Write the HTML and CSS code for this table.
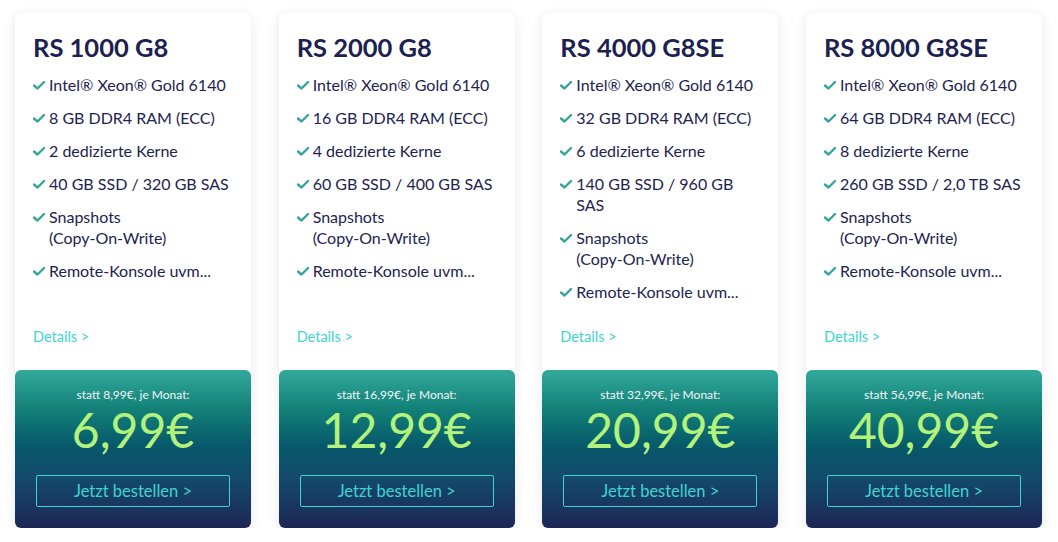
FILE: index.html
```html
<!DOCTYPE html>
<html lang="de">
<head>
<meta charset="utf-8">
<link rel="stylesheet" href="styles.css">
</head>
<body>
<div class="plans">
  <div class="card">
    <div class="top">
      <h2 class="title">RS 1000 G8</h2>
      <ul class="features">
        <li><svg class="chk" viewBox="0 0 12 9"><path d="M1 4.5 L4.5 7.5 L11 1"/></svg><span>Intel® Xeon® Gold 6140</span></li>
        <li><svg class="chk" viewBox="0 0 12 9"><path d="M1 4.5 L4.5 7.5 L11 1"/></svg><span>8 GB DDR4 RAM (ECC)</span></li>
        <li><svg class="chk" viewBox="0 0 12 9"><path d="M1 4.5 L4.5 7.5 L11 1"/></svg><span>2 dedizierte Kerne</span></li>
        <li><svg class="chk" viewBox="0 0 12 9"><path d="M1 4.5 L4.5 7.5 L11 1"/></svg><span>40 GB SSD / 320 GB SAS</span></li>
        <li><svg class="chk" viewBox="0 0 12 9"><path d="M1 4.5 L4.5 7.5 L11 1"/></svg><span>Snapshots<br>(Copy-On-Write)</span></li>
        <li><svg class="chk" viewBox="0 0 12 9"><path d="M1 4.5 L4.5 7.5 L11 1"/></svg><span>Remote-Konsole uvm...</span></li>
      </ul>
      <a class="details" href="#">Details &gt;</a>
    </div>
    <div class="price">
      <div class="old">statt 8,99€, je Monat:</div>
      <div class="amount">6,99€</div>
      <a class="order" href="#">Jetzt bestellen &gt;</a>
    </div>
  </div>
  <div class="card">
    <div class="top">
      <h2 class="title">RS 2000 G8</h2>
      <ul class="features">
        <li><svg class="chk" viewBox="0 0 12 9"><path d="M1 4.5 L4.5 7.5 L11 1"/></svg><span>Intel® Xeon® Gold 6140</span></li>
        <li><svg class="chk" viewBox="0 0 12 9"><path d="M1 4.5 L4.5 7.5 L11 1"/></svg><span>16 GB DDR4 RAM (ECC)</span></li>
        <li><svg class="chk" viewBox="0 0 12 9"><path d="M1 4.5 L4.5 7.5 L11 1"/></svg><span>4 dedizierte Kerne</span></li>
        <li><svg class="chk" viewBox="0 0 12 9"><path d="M1 4.5 L4.5 7.5 L11 1"/></svg><span>60 GB SSD / 400 GB SAS</span></li>
        <li><svg class="chk" viewBox="0 0 12 9"><path d="M1 4.5 L4.5 7.5 L11 1"/></svg><span>Snapshots<br>(Copy-On-Write)</span></li>
        <li><svg class="chk" viewBox="0 0 12 9"><path d="M1 4.5 L4.5 7.5 L11 1"/></svg><span>Remote-Konsole uvm...</span></li>
      </ul>
      <a class="details" href="#">Details &gt;</a>
    </div>
    <div class="price">
      <div class="old">statt 16,99€, je Monat:</div>
      <div class="amount">12,99€</div>
      <a class="order" href="#">Jetzt bestellen &gt;</a>
    </div>
  </div>
  <div class="card">
    <div class="top">
      <h2 class="title">RS 4000 G8SE</h2>
      <ul class="features">
        <li><svg class="chk" viewBox="0 0 12 9"><path d="M1 4.5 L4.5 7.5 L11 1"/></svg><span>Intel® Xeon® Gold 6140</span></li>
        <li><svg class="chk" viewBox="0 0 12 9"><path d="M1 4.5 L4.5 7.5 L11 1"/></svg><span>32 GB DDR4 RAM (ECC)</span></li>
        <li><svg class="chk" viewBox="0 0 12 9"><path d="M1 4.5 L4.5 7.5 L11 1"/></svg><span>6 dedizierte Kerne</span></li>
        <li><svg class="chk" viewBox="0 0 12 9"><path d="M1 4.5 L4.5 7.5 L11 1"/></svg><span>140 GB SSD / 960 GB<br>SAS</span></li>
        <li><svg class="chk" viewBox="0 0 12 9"><path d="M1 4.5 L4.5 7.5 L11 1"/></svg><span>Snapshots<br>(Copy-On-Write)</span></li>
        <li><svg class="chk" viewBox="0 0 12 9"><path d="M1 4.5 L4.5 7.5 L11 1"/></svg><span>Remote-Konsole uvm...</span></li>
      </ul>
      <a class="details" href="#">Details &gt;</a>
    </div>
    <div class="price">
      <div class="old">statt 32,99€, je Monat:</div>
      <div class="amount">20,99€</div>
      <a class="order" href="#">Jetzt bestellen &gt;</a>
    </div>
  </div>
  <div class="card">
    <div class="top">
      <h2 class="title">RS 8000 G8SE</h2>
      <ul class="features">
        <li><svg class="chk" viewBox="0 0 12 9"><path d="M1 4.5 L4.5 7.5 L11 1"/></svg><span>Intel® Xeon® Gold 6140</span></li>
        <li><svg class="chk" viewBox="0 0 12 9"><path d="M1 4.5 L4.5 7.5 L11 1"/></svg><span>64 GB DDR4 RAM (ECC)</span></li>
        <li><svg class="chk" viewBox="0 0 12 9"><path d="M1 4.5 L4.5 7.5 L11 1"/></svg><span>8 dedizierte Kerne</span></li>
        <li><svg class="chk" viewBox="0 0 12 9"><path d="M1 4.5 L4.5 7.5 L11 1"/></svg><span>260 GB SSD / 2,0 TB SAS</span></li>
        <li><svg class="chk" viewBox="0 0 12 9"><path d="M1 4.5 L4.5 7.5 L11 1"/></svg><span>Snapshots<br>(Copy-On-Write)</span></li>
        <li><svg class="chk" viewBox="0 0 12 9"><path d="M1 4.5 L4.5 7.5 L11 1"/></svg><span>Remote-Konsole uvm...</span></li>
      </ul>
      <a class="details" href="#">Details &gt;</a>
    </div>
    <div class="price">
      <div class="old">statt 56,99€, je Monat:</div>
      <div class="amount">40,99€</div>
      <a class="order" href="#">Jetzt bestellen &gt;</a>
    </div>
  </div>
</div>
</body>
</html>
```

FILE: styles.css
```css
* { box-sizing: border-box; }
html, body {
  margin: 0;
  padding: 0;
  background: #ffffff;
}
body {
  font-family: "Lato", "Open Sans", sans-serif;
  color: #1d2350;
}
.plans {
  display: grid;
  grid-template-columns: repeat(4, 236px);
  column-gap: 27.67px;
  padding: 13px 0 0 15px;
}
.card {
  height: 515px;
  display: flex;
  flex-direction: column;
  background: #fff;
  border-radius: 6px;
  box-shadow: 0 3px 12px rgba(20, 30, 60, 0.10);
  overflow: hidden;
}
.top {
  flex: 1;
  display: flex;
  flex-direction: column;
  padding: 19px 12px 23px 18px;
}
.title {
  margin: 0;
  font-size: 25.5px;
  line-height: 30px;
  font-weight: 700;
  color: #1b2150;
}
.features {
  list-style: none;
  margin: 12px 0 0 0;
  padding: 0;
  display: flex;
  flex-direction: column;
  gap: 12px;
}
.features li {
  display: flex;
  align-items: flex-start;
  gap: 4px;
  font-size: 16px;
  line-height: 21px;
  color: #1d2350;
}
.chk {
  flex: none;
  width: 12px;
  height: 9px;
  margin-top: 7px;
  fill: none;
  stroke: #35a49b;
  stroke-width: 2.4;
  stroke-linecap: round;
  stroke-linejoin: round;
}
.details {
  margin-top: auto;
  font-size: 14.5px;
  line-height: 20px;
  color: #3ed5cf;
  text-decoration: none;
}
.price {
  height: 158px;
  flex: none;
  display: flex;
  flex-direction: column;
  align-items: center;
  padding: 18px 21px 21px;
  border-radius: 6px 6px 0 0;
  background: linear-gradient(180deg, #32a99a 0%, #138078 25%, #06596a 48%, #134a6c 68%, #1e2756 100%);
}
.old {
  font-size: 12px;
  line-height: 14px;
  color: #f2f6f8;
}
.amount {
  font-size: 48px;
  line-height: 56px;
  font-weight: 400;
  color: #b4f37b;
}
.order {
  margin-top: 17px;
  align-self: stretch;
  height: 32px;
  border: 1px solid #3ed5cf;
  border-radius: 2px;
  color: #3ed5cf;
  text-decoration: none;
  font-size: 16.5px;
  line-height: 30px;
  text-align: center;
}
```
